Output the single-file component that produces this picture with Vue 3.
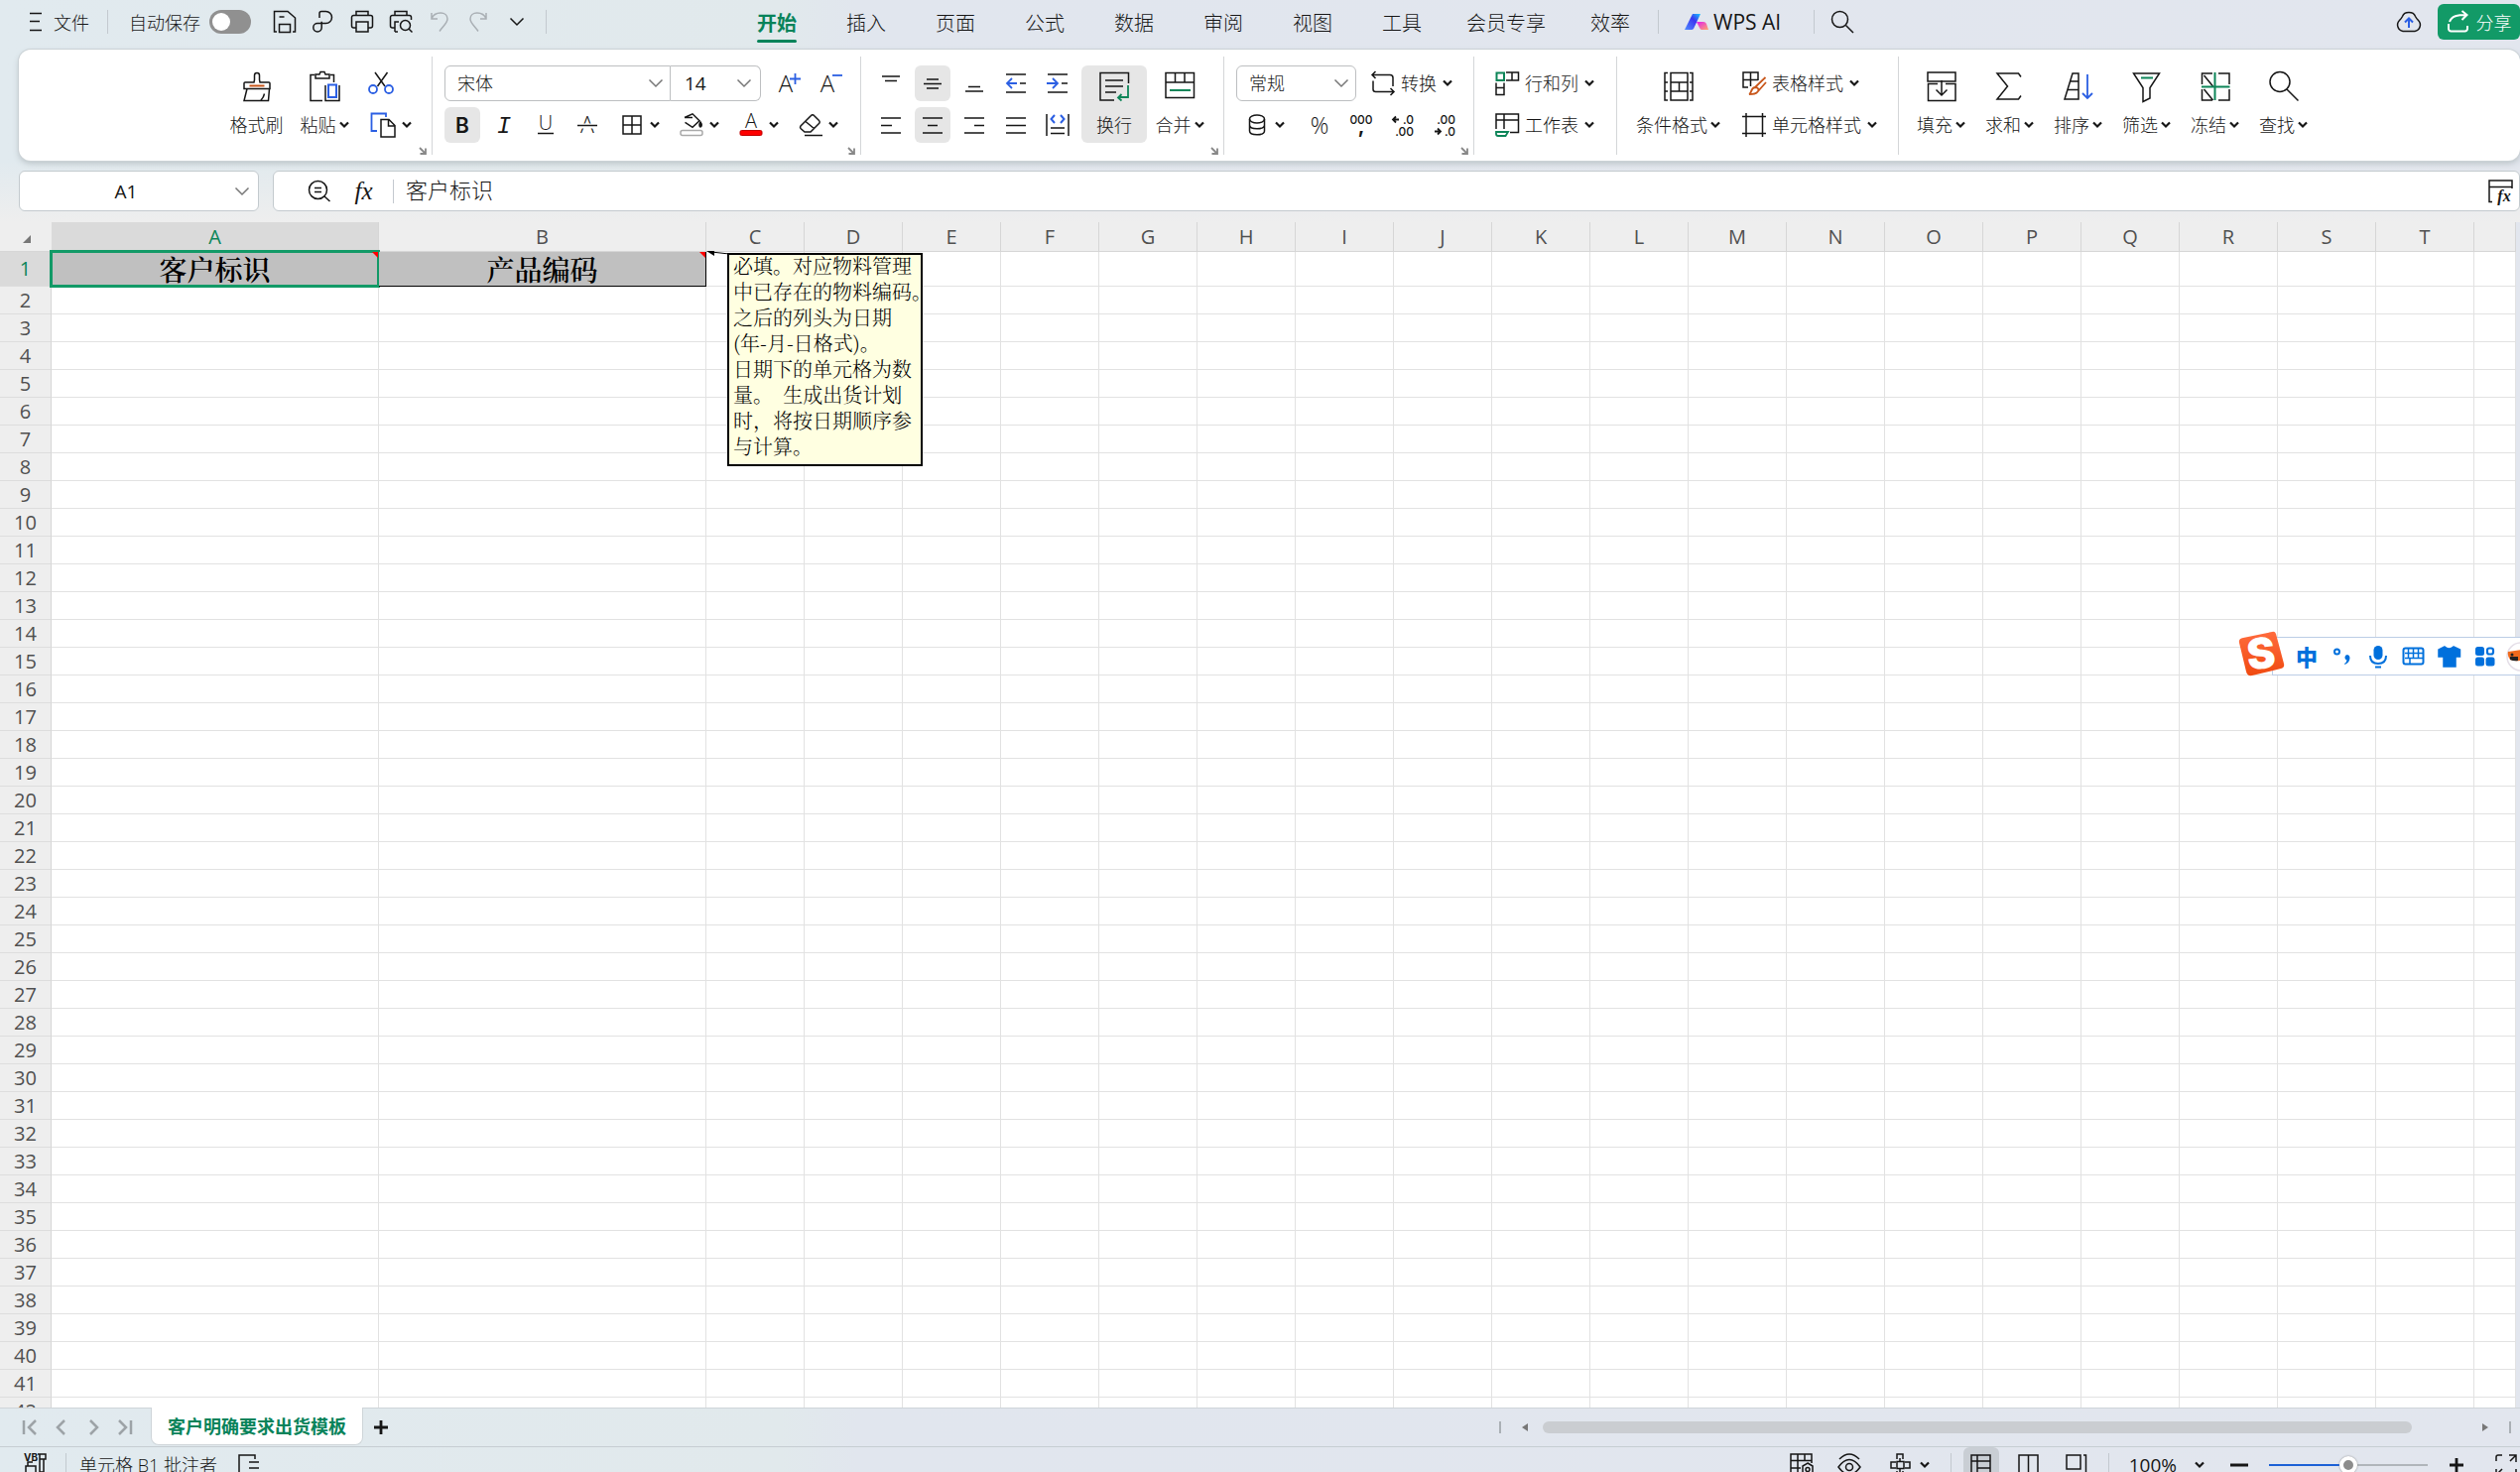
<script setup>
import { h, ref } from 'vue'

const BLUE = '#2b5fe3'
const GREEN = '#0d8558'
const ORANGE = '#c8561a'

// [width, height, svg body]
const icons = {
  menu: [24, 24, '<path d="M6 3.500h12M6 11.500h10M6 20.500h12"/>'],
  save: [24, 24, '<path d="M4 22H1.500V1.500H15L22.500 8v14H20M6.500 22.500v-8h11v8zM6.500 7h5"/>'],
  link: [24, 24, '<path d="M8 8V3.500q0-2 2-2h4.500a6 6 0 0 1 0 12H6a4.200 4.200 0 1 0 4.200 4.200v-6"/>'],
  print: [24, 24, '<path d="M6 5.500v-4h12v4M6 18H3.500a2 2 0 0 1-2-2V7.500a2 2 0 0 1 2-2h17a2 2 0 0 1 2 2V16a2 2 0 0 1-2 2H18M6 12h12v10H6z"/>'],
  preview: [24, 24, '<path d="M6 5.500v-4h12v4M6 18H3.500a2 2 0 0 1-2-2V7.500a2 2 0 0 1 2-2h17a2 2 0 0 1 2 2V10M6 22v-10h4M9 22H6"/><circle cx="16.500" cy="15.500" r="5"/><path d="M20 19l3.500 3.500"/>'],
  undo: [24, 24, '<path d="M4 3v6h6M4 9c3-8 16-8 16 0 0 4-4 7-8 12.500"/>'],
  redo: [24, 24, '<path d="M20 3v6h-6M20 9C17 1 4 1 4 9c0 4 4 7 8 12.500"/>'],
  chev: [16, 10, '<path d="M1.500 1.500L8 8l6.500-6.500"/>'],
  down: [10, 8, '<path d="M1 1.500l4 4 4-4" stroke-width="2.200"/>'],
  search: [26, 26, '<circle cx="10.500" cy="10.500" r="8"/><path d="M16.500 16.500l7.500 7.500"/>'],
  wps: [24, 18, '<defs><linearGradient id="w1" x1="0" y1="1" x2="1" y2="0"><stop offset="0" stop-color="#4f8dff"/><stop offset=".6" stop-color="#3a35f0"/><stop offset="1" stop-color="#18c8ff"/></linearGradient><linearGradient id="w2" x1="0" y1="0" x2="1" y2="1"><stop offset="0" stop-color="#e11bf2"/><stop offset="1" stop-color="#ffa86b"/></linearGradient></defs><path d="M8 1h8l-7 15q-1 1-2 1H0z" fill="url(#w1)" stroke="none"/><path d="M12 9h7q2 0 3 2l2 6h-7q-1 0-2-2z" fill="url(#w2)" stroke="none"/>'],
  cloud: [28, 22, `<path d="M8 20.500a6.500 6.500 0 0 1-3.500-11C6 8 6.500 7.500 7.500 5.500c2-5.300 11-5.300 13 0 1 2 1.500 2.500 3 4a6.500 6.500 0 0 1-3.500 11z"/><path stroke="${BLUE}" stroke-width="2" d="M14 17V8M10 11.500l4-4 4 4"/>`],
  share: [24, 24, '<path stroke-width="2" d="M2 14v5a2.500 2.500 0 0 0 2.500 2.500h14A2.500 2.500 0 0 0 21 19v-3M3 12c2-6 8-7 17-7M15.500 1L20.500 5l-5 5"/>'],
  brush: [30, 30, `<path d="M12 11l.500-2.500V4a2.500 2.500 0 0 1 5 0v4.500L18 11h9a1 1 0 0 1 1 1v5.500H2V12a1 1 0 0 1 1-1zM5 17.500L2 29.500h24.500l1-12M19 29c2-2 3-4 3.500-6.500"/><path stroke="${ORANGE}" stroke-width="2" d="M7.500 14.500h15"/>`],
  paste: [32, 30, `<path d="M14 29.500H2V3.500h4M22 3.500h3.500V11M7 7V3h4l1-2.500h4L17 3h4v4zM17 14v15.500h14V14M17 14"/><path stroke="${BLUE}" stroke-width="2" d="M20 13.500h8v12.500h-8z"/>`],
  cut: [26, 24, `<path d="M7 1l10 14M19.500 1l-10 14"/><g stroke="${BLUE}" stroke-width="1.800"><circle cx="5" cy="18" r="4"/><circle cx="21" cy="18" r="4"/></g>`],
  copy: [26, 26, `<path stroke="${BLUE}" stroke-width="1.800" d="M7 19H1.500V1.500H16V5"/><path d="M11 7.500h8l6 6v11.500H11zM18.500 8v6H25"/>`],
  launch: [8, 8, '<path stroke="#888" stroke-width="1.800" d="M1 1l6 6M7 1.500V7H1.500"/>'],
  bold: [24, 24, '<text x="12" y="19.500" font-family="Inter" font-weight="600" font-size="21" text-anchor="middle">B</text>'],
  italic: [24, 24, '<text x="12" y="20" font-family="Liberation Mono" font-weight="400" font-style="italic" font-size="24" text-anchor="middle">I</text>'],
  under: [24, 24, '<text x="12" y="16.500" font-family="Open Sans" font-size="20" text-anchor="middle">U</text><path d="M4 20.500h16"/>'],
  strike: [24, 24, '<text x="12" y="20" font-family="Open Sans" font-size="23" text-anchor="middle">A</text><path stroke="#fff" stroke-width="5" d="M5 13h14"/><path d="M2 12.500h20"/>'],
  border: [24, 24, '<rect x="3" y="3" width="18" height="18"/><path d="M12 3v18M3 12h18"/>'],
  fill: [24, 24, '<path d="M5 4.500L13 .8l7 7-7 6.500-7.500-5M5 4.500h8"/><path d="M21 9c3 4 0 5 0 5s-2.500-1 0-5z" fill="currentColor"/><rect x="1" y="17.500" width="22" height="5" rx="2" stroke="#aaa" fill="#fff"/>'],
  color: [24, 24, '<text x="12" y="14.500" font-family="Open Sans" font-size="20" text-anchor="middle">A</text><rect x="1" y="17.500" width="22" height="5" rx="1.500" stroke="#c00000" stroke-width="1" fill="#fe0000"/>'],
  erase: [24, 24, '<path d="M2 15.500a2 2 0 0 1 0-2.500L12.500 2.500a2 2 0 0 1 3 0l5 5a2 2 0 0 1 0 3L12 19H6zM7 8.500l9 7.500M6 22.500h18"/>'],
  bigger: [24, 24, `<text x="8" y="21" font-family="Open Sans" font-size="24" text-anchor="middle">A</text><path stroke="${BLUE}" stroke-width="1.800" d="M12 7.500h11M17.500 2v11"/>`],
  smaller: [24, 24, `<text x="8" y="21" font-family="Open Sans" font-size="24" text-anchor="middle">A</text><path stroke="${BLUE}" stroke-width="1.800" d="M13 4h10"/>`],
  vtop: [24, 24, '<path d="M3 5h18M6 9.500h12"/>'],
  vmid: [24, 24, '<path d="M6 8h12M3 12.500h18M6 17h12"/>'],
  vbot: [24, 24, '<path d="M6 15.500h12M3 20h18"/>'],
  outdent: [24, 24, `<path d="M2 3h20M2 21h20M16 12h6"/><path stroke="${BLUE}" stroke-width="1.800" d="M13 12H3M8 7l-5 5 5 5"/>`],
  indent: [24, 24, `<path d="M2 3h20M2 21h20M16 12h6"/><path stroke="${BLUE}" stroke-width="1.800" d="M1 12h11M7 7l5 5-5 5"/>`],
  left: [24, 24, '<path d="M2 5h20M2 12.500h11M2 20h20"/>'],
  center: [24, 24, '<path d="M2 5h20M7 12.500h10M2 20h20"/>'],
  right: [24, 24, '<path d="M2 5h20M12 12.500h10M2 20h20"/>'],
  justify: [24, 24, '<path d="M2 5h20M2 12.500h20M2 20h20"/>'],
  spread: [26, 24, `<path d="M2 1v22M24 1v22M6 15h14M6 20.500h14"/><path stroke="${BLUE}" stroke-width="2" d="M10 2L6.500 6 10 10M16 2l3.500 4-3.500 4"/>`],
  wrap: [30, 30, `<path d="M15 29H1V1.500h28.500V12M6 9h18M6 15h18M6 21h11"/><path stroke="${GREEN}" stroke-width="1.800" d="M29 14v12H19M22.500 23L19 26.500l3.500 3"/>`],
  merge: [30, 30, `<path d="M1 1.500h28.500v25H1zM1 11h28.500M10.500 1.500V11M20 1.500V11"/><path stroke="${GREEN}" stroke-width="2" d="M5 19h21"/>`],
  convert: [24, 24, '<path d="M7 3.500H19a3 3 0 0 1 3 3V15M1 3.500h6M4.500 0L1 3.500 4.500 7M2 9.500V18a2.500 2.500 0 0 0 2.500 2.500H22M19.500 17l3.500 3.500-3.500 3.500"/>'],
  coin: [24, 24, '<ellipse cx="12" cy="6" rx="7.500" ry="4"/><path d="M4.500 6v12c0 5 15 5 15 0V6M4.500 12c0 5 15 5 15 0"/>'],
  percent: [24, 24, '<text x="12" y="20.500" font-family="Open Sans" font-size="23" text-anchor="middle">%</text>'],
  thousand: [24, 24, '<text x="12" y="11" font-family="Inter" font-weight="500" font-size="12" text-anchor="middle">000</text><text x="12" y="20" font-family="Inter" font-weight="700" font-size="20" text-anchor="middle">,</text>'],
  decadd: [24, 24, '<path stroke-width="1.800" d="M2 6.500h6M5 3.500L2 6.500l3 3"/><text x="23" y="11" font-family="Inter" font-weight="500" font-size="12" text-anchor="end">.0</text><text x="23" y="23" font-family="Inter" font-weight="500" font-size="12" text-anchor="end">.00</text>'],
  decsub: [24, 24, '<path stroke-width="1.800" d="M2 18.500h6M5 15.500l3 3-3 3"/><text x="23" y="11" font-family="Inter" font-weight="500" font-size="12" text-anchor="end">.00</text><text x="23" y="23" font-family="Inter" font-weight="500" font-size="12" text-anchor="end">.0</text>'],
  rowcol: [24, 24, `<path d="M11 1h12.500v8H11M17 1v8M1 11.500V23.500h8V11.500M1 16.500h8"/><path stroke="${GREEN}" stroke-width="2" d="M1.500 1.500h7.500v7.500H1.500z"/>`],
  sheet: [24, 24, `<path d="M1 16V1h22.500v18.500H15M1 7h22.500M9 1v15"/><path stroke="${GREEN}" stroke-width="1.800" d="M1 19h12l-2.500 4H3q-2 0-2-2z"/>`],
  cond: [30, 30, '<path d="M4 1.500H1V29h3M26 1.500h3V29h-3M1 11h3M1 20h3M26 11h3M26 20h3M7 1.500h17V11H7zM7 20h17v9H7zM7 11v9M24 11v9M15.500 11v9"/>'],
  tstyle: [24, 24, `<path d="M6 16H1V1h15v8M1 8.500h15M8.500 1v14"/><path stroke="${ORANGE}" stroke-width="1.800" d="M23.500 6L13 16M24 11l-8 9M7 23c3-1 1-6 6-7 3 0 4 2 3 4-2 3-5 3-9 3z"/>`],
  cstyle: [24, 24, '<path d="M4 0v24M20.500 0v24M0 3.500h24M0 20.500h24"/>'],
  fillin: [30, 30, '<path d="M1 1h28v9H1zM11 12.500H1.500V29.500H29V12.500H19M15 9v15M9.500 18.500L15 24l5.500-5.500"/>'],
  sum: [30, 30, '<path d="M26 5.500L23.500 2H2l10.500 13L2 28h21.500L26 24.500"/>'],
  sort: [30, 30, `<path d="M15 2H9L1 28h14zM7 10h8M4.500 18.500H15"/><path stroke="${BLUE}" stroke-width="1.800" d="M24 3v24M19 22l5 5 5-5"/>`],
  filter: [30, 30, `<path d="M7 2H1.500l9.500 14.500V30.500L18 27V16.500L27.500 2H7"/><path stroke="${GREEN}" stroke-width="2" d="M9 6.500h12"/>`],
  freeze: [30, 30, `<path d="M12 2H1.500v11M18 2h11v11M1.500 18v11H12M29 18v11H18M3.500 4l9 11M3.500 18l9 11"/><path stroke="${GREEN}" stroke-width="2" d="M14.500 1v28M1 15.500h28.500"/>`],
  find: [30, 30, '<circle cx="11" cy="10.500" r="10"/><path d="M18 18l11.500 11.500"/>'],
  zoomer: [24, 24, '<circle cx="10.500" cy="10.500" r="9"/><path d="M17 17l5.500 5M7 8.500h7M7 12.500h7"/>'],
  fxpanel: [26, 26, '<path d="M5 23.500H2V2h23v8M2 8.500h23"/><text x="17" y="23" font-family="Liberation Serif" font-style="italic" font-weight="700" font-size="16" text-anchor="middle">fx</text>'],
  first: [18, 18, '<path stroke-width="2.500" d="M3 2v14M15 2L8 9l7 7"/>'],
  prev: [18, 18, '<path stroke-width="2.500" d="M12 2L5 9l7 7"/>'],
  next: [18, 18, '<path stroke-width="2.500" d="M6 2l7 7-7 7"/>'],
  last: [18, 18, '<path stroke-width="2.500" d="M3 2l7 7-7 7M15 2v14"/>'],
  plus: [16, 16, '<path stroke-width="2.800" d="M8 1v14M1 8h14"/>'],
  minus: [18, 16, '<path stroke-width="3" d="M0 8h18"/>'],
  vba: [24, 24, '<text x="0" y="8" font-family="Inter" font-weight="700" font-size="10">VB</text><path d="M14 1h8v5h-6M16 1v18h4V6M2 19v-6h10v6M4 13V9h5"/>'],
  listing: [24, 24, '<path d="M12 22H2V2h16v4M12 9h10M12 15h10M12 21h10"/>'],
  gridset: [26, 26, '<path d="M23 11V2H2v22h9M2 8.500h21M2 16h10M9 2v22M16 2v7"/><path d="M19 11l5 3v7l-5 3-5-3v-7z"/><circle cx="19" cy="17.500" r="2"/>'],
  eye: [26, 26, '<path d="M3 7Q13-3 23 7M2 15q11-15 22 0-11 15-22 0z"/><circle cx="13" cy="15" r="3.500"/>'],
  cross: [24, 26, '<path d="M8 7V2h6v5M8 19v5h6v-5M7 10H2v6h5M16 10h5v6h-5M8 9.500h7v7H8zM11 6v4M11 16v4"/>'],
  vnormal: [24, 24, '<path d="M2 2h19v21H2zM2 8h19M8 2v21M8 15h13"/>'],
  vsplit: [24, 24, '<path d="M2 2h19v21H2zM11.500 2v21"/>'],
  vpage: [24, 24, '<path d="M2 2h14v14H2zM19 2h2.500v21M16 19v4H2"/>'],
  full: [24, 24, '<path d="M2 8V4a2 2 0 0 1 2-2h4M15 2h7v7M22 2l-6 6M22 16v6h-6M2 16v6h6M2 22l6-6"/>'],
  tri: [8, 10, '<path d="M1 1v8l6-4z" fill="#777" stroke="none"/>'],
  tril: [8, 10, '<path d="M7 1v8L1 5z" fill="#777" stroke="none"/>'],
  sogou: [50, 48, '<defs><linearGradient id="sg" x1="0" y1="0" x2="0" y2="1"><stop offset="0" stop-color="#ff6b3d"/><stop offset="1" stop-color="#f04a10"/></linearGradient></defs><path d="M6 8L35 2q3-1 4 2l8 30q1 4-3 5l-29 7q-5 1-6-4L2 13q-1-4 4-5z" fill="url(#sg)" stroke="none"/><text x="24" y="39" font-family="Inter" font-weight="900" font-size="43" text-anchor="middle" fill="#fff" transform="rotate(-6 24 24)">S</text>'],
  punct: [20, 20, '<circle cx="4.500" cy="5" r="2.500" stroke-width="2"/><path d="M15 8a3 3 0 0 1 2.500 3q0 5-5 7l-.5-1q2-1 2.500-3.500A2.800 2.800 0 0 1 15 8z" fill="currentColor" stroke="none"/>'],
  mic: [20, 24, '<rect x="5.500" y="1" width="9" height="14" rx="4.500" fill="currentColor" stroke="none"/><path stroke-width="2" d="M2 11q0 8 8 8t8-8M7 22.500h6"/>'],
  keys: [24, 20, '<rect x="1.500" y="1.500" width="20" height="16" rx="2" stroke-width="2"/><path d="M3 6.500h18M3 11.500h18M6.500 2v10M11.500 2v10M16.500 2v10M8 12v5"/>'],
  shirt: [24, 22, '<path d="M7 1q4.500 4 9 0l6.500 3v7H18v10H6V11H1V4z" fill="currentColor"/>'],
  apps: [20, 20, '<g fill="currentColor" stroke="none"><rect x="0" y="0" width="9" height="9" rx="2.500"/><rect x="0" y="10.500" width="9" height="9" rx="2.500"/><rect x="10.500" y="10.500" width="9" height="9" rx="2.500"/></g><rect x="12" y="1.500" width="6" height="6" rx="2" stroke-width="2.200"/>'],
  face: [30, 30, '<circle cx="15" cy="15" r="14" fill="#fff" stroke="#e5dfe8"/><path d="M2 10l22-3v9q-12 5-20 2-3-4-2-8z" fill="#f06a1d" stroke="none"/><path d="M4 15h8v4q-4 1-8-1z" fill="#222" stroke="none"/><circle cx="6" cy="13" r="1.500" fill="#222" stroke="none"/>'],
}

const Icon = ({ n }) => {
  const [w, ht, body] = icons[n]
  return h('svg', {
    width: w, height: ht, viewBox: `0 0 ${w} ${ht}`, fill: 'none', stroke: 'currentColor',
    'stroke-width': 1.5, 'aria-hidden': 'true', class: 'ic', innerHTML: body,
  })
}
Icon.props = ['n']

const quick = ['save', 'link', 'print', 'preview', 'undo', 'redo', 'chev']
const tabs = ['开始', '插入', '页面', '公式', '数据', '审阅', '视图', '工具', '会员专享', '效率']
const splitTools = ['border', 'fill', 'color', 'erase']
const editTools = [['fillin', '填充'], ['sum', '求和'], ['sort', '排序'], ['filter', '筛选'], ['freeze', '冻结'], ['find', '查找']]
const cols = 'CDEFGHIJKLMNOPQRST'.split('')
const autosave = ref(false)
const zoom = ref(50)
</script>

<template>
  <div class="app">
    <header class="top">
      <button class="file"><Icon n="menu" /><span>文件</span></button>
      <i class="bar"></i>
      <label class="auto"><span>自动保存</span><input v-model="autosave" type="checkbox" /></label>
      <button v-for="q in quick" :key="q" class="q" :class="{ dim: q === 'undo' || q === 'redo' }" :aria-label="q"><Icon :n="q" /></button>
      <i class="bar qbar"></i>
      <nav>
        <a v-for="(t, i) in tabs" :key="t" href="#" :class="{ on: i === 0 }"><span>{{ t }}</span></a>
      </nav>
      <i class="bar"></i>
      <button class="ai"><Icon n="wps" />WPS AI</button>
      <i class="bar"></i>
      <button class="q find" aria-label="search"><Icon n="search" /></button>
      <button class="q cloud" aria-label="cloud"><Icon n="cloud" /></button>
      <button class="share"><Icon n="share" /><span>分享</span></button>
    </header>

    <section class="ribbon">
      <div class="group clip">
        <button class="big wide"><Icon n="brush" /><span>格式刷</span></button>
        <button class="big"><Icon n="paste" /><span>粘贴<Icon n="down" /></span></button>
        <div class="rows clips">
          <button class="b" aria-label="cut"><Icon n="cut" /></button>
          <button class="b" aria-label="copy"><Icon n="copy" /><Icon n="down" /></button>
        </div>
        <Icon n="launch" class="launch" />
      </div>
      <div class="group">
        <div class="rows">
          <div class="row">
            <div class="combo">
              <label class="sel font"><select aria-label="font"><option>宋体</option></select><Icon n="chev" /></label>
              <label class="sel size"><select aria-label="size"><option>14</option></select><Icon n="chev" /></label>
            </div>
            <button class="b sq after" aria-label="bigger"><Icon n="bigger" /></button>
            <button class="b sq" aria-label="smaller"><Icon n="smaller" /></button>
          </div>
          <div class="row">
            <button class="b sq on" aria-label="bold"><Icon n="bold" /></button>
            <button class="b sq" aria-label="italic"><Icon n="italic" /></button>
            <button class="b sq" aria-label="underline"><Icon n="under" /></button>
            <button class="b sq" aria-label="strike"><Icon n="strike" /></button>
            <button v-for="s in splitTools" :key="s" class="b split" :aria-label="s"><Icon :n="s" /><Icon n="down" /></button>
          </div>
        </div>
        <Icon n="launch" class="launch" />
      </div>
      <div class="group">
        <div class="rows">
          <div class="row">
            <button v-for="(s, i) in ['vtop', 'vmid', 'vbot', 'outdent', 'indent']" :key="s" class="b sq" :class="{ on: i === 1 }" :aria-label="s"><Icon :n="s" /></button>
          </div>
          <div class="row">
            <button v-for="(s, i) in ['left', 'center', 'right', 'justify', 'spread']" :key="s" class="b sq" :class="{ on: i === 1 }" :aria-label="s"><Icon :n="s" /></button>
          </div>
        </div>
        <button class="big on next"><Icon n="wrap" /><span>换行</span></button>
        <button class="big"><Icon n="merge" /><span>合并<Icon n="down" /></span></button>
        <Icon n="launch" class="launch" />
      </div>
      <div class="group">
        <div class="rows">
          <div class="row">
            <label class="sel num"><select aria-label="format"><option>常规</option></select><Icon n="chev" /></label>
            <button class="b split"><Icon n="convert" />转换<Icon n="down" /></button>
          </div>
          <div class="row">
            <button class="b split coin" aria-label="currency"><Icon n="coin" /><Icon n="down" /></button>
            <button v-for="s in ['percent', 'thousand', 'decadd', 'decsub']" :key="s" class="b sq" :aria-label="s"><Icon :n="s" /></button>
          </div>
        </div>
        <Icon n="launch" class="launch" />
      </div>
      <div class="group">
        <div class="rows">
          <button class="b split text"><Icon n="rowcol" />行和列<Icon n="down" /></button>
          <button class="b split text"><Icon n="sheet" />工作表<Icon n="down" /></button>
        </div>
      </div>
      <div class="group">
        <button class="big cond"><Icon n="cond" /><span>条件格式<Icon n="down" /></span></button>
        <div class="rows next">
          <button class="b split text"><Icon n="tstyle" />表格样式<Icon n="down" /></button>
          <button class="b split"><Icon n="cstyle" />单元格样式<Icon n="down" /></button>
        </div>
      </div>
      <div class="group edit">
        <button v-for="[n, t] in editTools" :key="n" class="big wide"><Icon :n="n" /><span>{{ t }}<Icon n="down" /></span></button>
      </div>
    </section>

    <section class="formula">
      <label class="name"><input value="A1" aria-label="cell" /><Icon n="chev" /></label>
      <div class="fx">
        <button class="q" aria-label="zoom"><Icon n="zoomer" /></button>
        <button class="q fn">fx</button>
        <i class="bar"></i>
        <input value="客户标识" aria-label="formula" />
        <button class="q" aria-label="panel"><Icon n="fxpanel" /></button>
      </div>
    </section>

    <main>
      <table>
        <colgroup>
          <col class="c0" /><col class="ca" /><col class="ca" /><col v-for="c in cols" :key="c" class="cc" /><col />
        </colgroup>
        <thead>
          <tr><th><i class="corner"></i></th><th class="sel-h">A</th><th>B</th><th v-for="c in cols" :key="c">{{ c }}</th><th></th></tr>
        </thead>
        <tbody>
          <tr class="first">
            <th class="sel-h">1</th>
            <td class="cell active">客户标识<i class="mark"></i></td>
            <td class="cell code">
              产品编码<i class="mark"></i>
              <aside class="note">
                <svg class="lead" width="24" height="8" viewBox="0 0 24 8"><path d="M0 0l8 5V0z" /><path d="M5 1l18 2" stroke="#000" /></svg>
                <p>必填。对应物料管理<br />中已存在的物料编码。<br />之后的列头为日期<br />(年-月-日格式)。<br />日期下的单元格为数<br />量。&nbsp; 生成出货计划<br />时，将按日期顺序参<br />与计算。</p>
              </aside>
            </td>
            <td v-for="c in cols" :key="c"></td><td></td>
          </tr>
          <tr v-for="r in 41" :key="r">
            <th>{{ r + 1 }}</th><td v-for="c in 21" :key="c"></td>
          </tr>
        </tbody>
      </table>
    </main>

    <footer>
      <div class="sheets">
        <button v-for="s in ['first', 'prev', 'next', 'last']" :key="s" class="arrow" :aria-label="s"><Icon :n="s" /></button>
        <a class="sheet" href="#">客户明确要求出货模板</a>
        <button class="add" aria-label="add"><Icon n="plus" /></button>
        <div class="hscroll"><i class="grip"></i><Icon n="tril" /><div class="track"><b></b></div><Icon n="tri" /><i class="grip"></i></div>
      </div>
      <div class="status">
        <div class="inner">
          <button class="s" aria-label="vba"><Icon n="vba" /></button>
          <i class="bar"></i>
          <span class="msg">单元格 B1 批注者</span>
          <button class="s" aria-label="list"><Icon n="listing" /></button>
          <div class="views">
            <button class="s" aria-label="grid"><Icon n="gridset" /></button>
            <button class="s" aria-label="eye"><Icon n="eye" /></button>
            <button class="s cross" aria-label="cross"><Icon n="cross" /><Icon n="down" /></button>
            <i class="bar"></i>
            <button class="s v on" aria-label="normal"><Icon n="vnormal" /></button>
            <button class="s v" aria-label="split"><Icon n="vsplit" /></button>
            <button class="s v" aria-label="page"><Icon n="vpage" /></button>
            <i class="bar"></i>
            <button class="s pct">100%<Icon n="down" /></button>
            <button class="s" aria-label="minus"><Icon n="minus" /></button>
            <input v-model="zoom" type="range" aria-label="zoom" />
            <button class="s" aria-label="plus"><Icon n="plus" /></button>
            <button class="s end" aria-label="full"><Icon n="full" /></button>
          </div>
        </div>
      </div>
    </footer>

    <div class="ime">
      <Icon n="sogou" class="logo" />
      <b>中</b><Icon n="punct" /><Icon n="mic" /><Icon n="keys" /><Icon n="shirt" /><Icon n="apps" /><Icon n="face" />
    </div>
  </div>
</template>

<style>
body { overflow: hidden; }
.ic { display: block; flex: none; overflow: visible; }
.ic text { fill: currentColor; stroke: none; }
.ic text[fill] { fill: #fff; }
</style>

<style scoped>
* { box-sizing: border-box; }
.app {
  display: flex; flex-direction: column; height: 100vh; overflow: hidden; position: relative;
  background: linear-gradient(90deg, #e1eaef, #e1e9ec 31%, #e1e6ee 34%, #e2e6ee);
  color: #161616; font: 300 18px/24px "Open Sans", "Noto Sans CJK SC", sans-serif;
}
button, input, select { font: inherit; color: inherit; border: 0; background: none; padding: 0; margin: 0; outline: 0; }
button { display: flex; align-items: center; flex: none; white-space: nowrap; }
a { color: inherit; text-decoration: none; }
.bar { width: 1px; height: 24px; background: #c3c9cf; flex: none; }

.top { display: flex; align-items: center; height: 44px; margin-bottom: 6px; flex: none; }
.top span { padding-top: 2px; }
.file { gap: 6px; padding: 0 18px 0 24px; }
.auto { display: flex; align-items: center; gap: 9px; margin: 0 14px 0 21px; }
.auto input { appearance: none; width: 42px; height: 24px; border-radius: 12px; background: #909090; display: flex; align-items: center; padding: 3px; }
.auto input::before { content: ""; width: 18px; height: 18px; border-radius: 50%; background: #fff; }
.q { width: 39px; height: 36px; justify-content: center; }
.dim { color: #a9afb4; }
.qbar { margin-left: 10px; }
nav { display: flex; margin-left: 187px; }
nav a { min-width: 90px; padding: 0 20px; text-align: center; font-size: 20px; line-height: 44px; height: 44px; position: relative; }
nav span { display: block; }
nav .on { color: #08835a; font-weight: 700; }
nav .on::after { content: ""; position: absolute; left: 25px; right: 25px; bottom: 1px; height: 3px; border-radius: 2px; background: #08835a; }
nav + .bar { margin-left: 3px; }
.ai { gap: 5px; padding: 0 33px 0 26px; font-size: 21px; font-weight: 400; }
.find { margin-left: 8px; }
.cloud { margin-left: auto; margin-right: 10px; }
.share { width: 83px; height: 36px; margin-bottom: 1px; border-radius: 6px; background: #129a67; color: #fff; gap: 6px; justify-content: center; }

.ribbon { display: flex; height: 112px; margin-left: 19px; flex: none; background: #fff; border-radius: 12px; box-shadow: 0 0 0 1px #cbd2d6, 0 3px 6px #b9c2c6; }
.group { display: flex; padding: 16px 11px 0 12px; height: 112px; position: relative; flex: none; }
.group:not(.edit)::after { content: ""; position: absolute; right: -1px; top: 7px; width: 1px; height: 99px; background: #d4d6d8; }
.group + .group { margin-left: 1px; }
.clip { padding: 16px 12px 0 205px; gap: 1px; }
.edit { padding-left: 8px; }
.launch { position: absolute; right: 5px; bottom: 6px; }
.rows { display: flex; flex-direction: column; gap: 6px; }
.row { display: flex; gap: 6px; }
.clips { margin-left: 10px; width: 52px; }
.b { height: 36px; border-radius: 6px; gap: 6px; }
.clips .b { padding-left: 2px; }
.clips .b:first-child { padding-left: 0; }
.sq { width: 36px; justify-content: center; }
.on { background: #e6e6e6; }
nav .on { background: none; }
.after { margin-left: 5px; }
.split { padding: 0 5px 0 9px; }
.text { padding-right: 11px; }
.rows > .split:not(.text) { padding-right: 10px; }
.coin { margin-right: 6px; }
.big { flex-direction: column; align-items: center; width: 66px; height: 78px; padding-top: 6px; gap: 14px; border-radius: 6px; }
.big span { display: flex; align-items: center; gap: 3px; line-height: 20px; }
.wide { width: 69px; }
.cond { width: 99px; }
.next { margin-left: 6px; }
.combo { display: flex; }
.sel { display: flex; align-items: center; position: relative; height: 36px; border: 1px solid #bdbfc1; border-radius: 6px; }
.sel select { appearance: none; width: 100%; height: 34px; padding-left: 12px; }
.sel svg { position: absolute; right: 6px; color: #777; pointer-events: none; }
.font { width: 228px; border-radius: 6px 0 0 6px; }
.size { width: 91px; border-left: 0; border-radius: 0 6px 6px 0; font-size: 19px; font-weight: 400; }
.size select { padding-left: 14px; }
.size svg, .name svg { right: 8px; }
.num { width: 121px; }

.formula { display: flex; gap: 14px; padding: 10px 0 11px 19px; flex: none; background: linear-gradient(#0000, #eee); }
.name, .fx { display: flex; align-items: center; height: 41px; background: #fff; border: 1px solid #c3cace; border-radius: 6px; }
.name { width: 242px; position: relative; font-weight: 400; }
.name input { width: 214px; text-align: center; font-size: 19px; }
.name svg { position: absolute; color: #777; }
.fx { flex: 1; padding-left: 26px; }
.fn { width: 51px; font: italic 25px "Liberation Serif", serif; }
.fx .bar { margin-left: 4px; }
.fx input { flex: 1; font-size: 22px; padding-left: 12px; height: 30px; margin-bottom: 6px; }

main { flex: 1; min-height: 0; overflow: hidden; background: #fff; margin-right: 4px; }
table { width: 100%; table-layout: fixed; border-collapse: separate; border-spacing: 0; }
.c0 { width: 52px; } .ca { width: 330px; } .cc { width: 99px; }
th, td { height: 28px; padding: 0; border-right: 1px solid #e2e2e2; border-bottom: 1px solid #e2e2e2; }
th { background: #eee; color: #505050; font: 400 20px/24px "Open Sans", sans-serif; text-align: center; border-right-color: #d6d6d6; }
tbody th { border-bottom-color: #ddd; }
thead th { height: 30px; border-bottom-color: #d6d6d6; }
thead th:first-child { border-right: 0; }
.sel-h { background: #dadada; color: #0b8558; }
.corner { display: block; margin: 4px 0 0 23px; border: 4px solid #777; border-top-color: transparent; border-left-color: transparent; width: 8px; height: 8px; }
.first > * { height: 35px; }
.cell { position: relative; background: #c0c0c0; color: #000; text-align: center; font: 600 28px/34px "Noto Serif CJK SC", "Noto Sans CJK SC", serif; border-color: #000; }
.active::before { content: ""; position: absolute; inset: -2px; border: 3px solid #129a67; }
.mark { position: absolute; right: 0; top: 0; border: 3px solid #f00; border-left-color: transparent; border-bottom-color: transparent; }
.note { position: absolute; left: 351px; top: 1px; width: 197px; height: 215px; border: 2px solid #000; background: #ffffe1; z-index: 2; }
.note p { margin: -2px 0 0; padding-left: 4px; white-space: nowrap; text-align: left; font: 300 20px/26px "Noto Serif CJK SC", "Noto Sans CJK SC", serif; }
.lead { position: absolute; left: -23px; top: -4px; }

footer { flex: none; }
.sheets { display: flex; align-items: flex-start; height: 40px; border-top: 1px solid #cfd5d9; border-bottom: 1px solid #c6cdd2; }
.arrow { height: 38px; width: 32px; justify-content: center; color: #9da3a7; }
.arrow:first-child { margin-left: 14px; }
.sheet { margin: -1px 0 0 10px; width: 214px; height: 38px; line-height: 38px; text-align: center; font-weight: 700; color: #08835a; background: #fff; border: 1px solid #cfd5d9; border-top: 0; border-radius: 0 0 8px 8px; }
.add { height: 38px; padding-left: 10px; }
.hscroll { display: flex; align-items: center; width: 40.5%; height: 38px; margin-left: auto; padding-right: 9px; }
.grip { width: 2px; height: 12px; background: #aab0b5; }
.hscroll svg { margin: 0 20px; }
.hscroll > svg:first-of-type { margin: 0 14px 0 20px; }
.track { flex: 1; padding-right: 50px; }
.track b { display: block; height: 12px; border-radius: 6px; background: #cacdd1; }
.status { height: 25px; overflow: hidden; }
.inner { display: flex; align-items: center; height: 36px; padding-left: 24px; }
.inner > .bar { margin: 0 13px 0 18px; }
.msg { margin-right: 20px; }
.views { display: flex; align-items: center; margin-left: auto; gap: 12px; }
.s { height: 36px; justify-content: center; }
.views > .s:first-child { margin-right: 10px; }
.cross { gap: 7px; margin: 0 9px 0 15px; }
.v { width: 36px; border-radius: 6px; }
.v.on { background: #c9ced4; }
.v + .bar { margin-left: 2px; }
.pct { gap: 18px; margin: 0 14px 0 8px; font-size: 19px; font-weight: 400; }
.views input { appearance: none; width: 160px; height: 18px; margin: 0 9px; background: linear-gradient(90deg, #1c61d6 50%, #b0b5ba 50%) center / 100% 2px no-repeat; }
.views input::-webkit-slider-thumb { appearance: none; width: 18px; height: 18px; border-radius: 50%; border: 4px solid #fff; background: #8c8c8c; box-shadow: 0 0 2px #888; }
.end { margin: 0 2px 0 18px; }

.ime { position: absolute; right: 0; top: 642px; z-index: 3; display: flex; align-items: center; width: 250px; height: 39px; padding-left: 16px; background: #fff; border: 1px solid #bccde6; border-right: 0; color: #0070dc; }
.ime > * { width: 36px; flex: none; text-align: center; }
.ime b { font-size: 22px; font-weight: 900; }
.ime .logo { position: absolute; left: -36px; top: -8px; width: 50px; }
</style>
